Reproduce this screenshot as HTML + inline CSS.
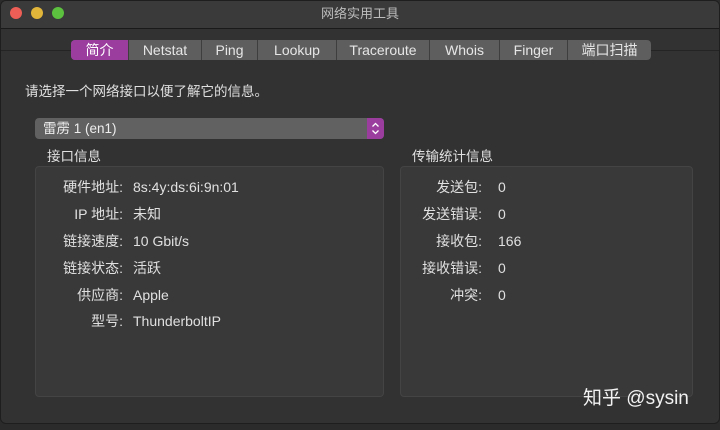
<!DOCTYPE html>
<html><head><meta charset="utf-8"><style>
*{margin:0;padding:0;box-sizing:border-box}
body{width:720px;height:430px;background:#2b2b2b;font-family:"Liberation Sans","Noto Sans CJK SC",sans-serif;color:#dcdcdc;position:relative;overflow:hidden}
.win{position:absolute;left:0;top:0;width:720px;height:424px;background:#323232;border-radius:6px;overflow:hidden;border:1px solid #1e1e1e}
.title{height:28px;background:#3a3a3a;border-bottom:1px solid #1a1a1a;text-align:center;font-size:13px;line-height:26px;color:#bcbcbc}
.dot{position:absolute;top:6px;width:12px;height:12px;border-radius:50%}
.hline{position:absolute;left:0;right:0;top:49px;height:1px;background:#242424}
.tabs{position:absolute;top:39px;left:70px;height:20px;display:flex;border-radius:4px;overflow:hidden;background:#5e5e5e}
.tabs div{font-size:14px;line-height:20px;color:#e6e6e6;text-align:center;border-right:1px solid #3e3e3e}
.tabs .on{background:#9a3d9f;color:#fff}
.t{position:absolute;font-size:13.5px;line-height:18px;color:#e0e0e0}
.pop{position:absolute;left:34px;top:117px;width:349px;height:21px;background:#616161;border-radius:4px;font-size:13.5px;line-height:21px;padding-left:8px;color:#eee}
.pop .ar{position:absolute;right:0;top:0;width:17px;height:21px;background:#9a3d9f;border-radius:0 4px 4px 0}
.box{position:absolute;top:165px;height:231px;background:#393939;border:1px solid #444;border-radius:4px}
.row{position:absolute;display:flex;font-size:14px;line-height:18px;height:18px;color:#e0e0e0;white-space:nowrap}
.row .l{text-align:right;flex:none}
.L .l{width:82px;margin-right:10px}
.R .l{width:81px;margin-right:16px}
</style></head><body>
<div class="win">
<div class="title">网络实用工具</div>
<div class="dot" style="left:9px;background:#ed5e56"></div>
<div class="dot" style="left:30px;background:#e0b53a"></div>
<div class="dot" style="left:51px;background:#5cc13e"></div>
<div class="hline"></div>
<div class="tabs">
<div class="on" style="width:58px">简介</div><div style="width:73px">Netstat</div><div style="width:56px">Ping</div><div style="width:79px">Lookup</div><div style="width:93px">Traceroute</div><div style="width:70px">Whois</div><div style="width:68px">Finger</div><div style="width:83px;border:none">端口扫描</div>
</div>
<div class="t" style="left:24px;top:82px">请选择一个网络接口以便了解它的信息。</div>
<div class="pop">雷雳 1 (en1)<div class="ar"><svg width="17" height="21"><path d="M5.5 8.5 8.5 5.5 11.5 8.5M5.5 12.5 8.5 15.5 11.5 12.5" fill="none" stroke="#fff" stroke-width="1.3"/></svg></div></div>
<div class="t" style="left:46px;top:147px">接口信息</div>
<div class="t" style="left:411px;top:147px">传输统计信息</div>
<div class="box" style="left:34px;width:349px"></div>
<div class="box" style="left:399px;width:293px"></div>

<div class="row L" style="top:177px;left:40px"><span class="l">硬件地址:</span><span>8s:4y:ds:6i:9n:01</span></div>
<div class="row L" style="top:204px;left:40px"><span class="l">IP 地址:</span><span>未知</span></div>
<div class="row L" style="top:231px;left:40px"><span class="l">链接速度:</span><span>10 Gbit/s</span></div>
<div class="row L" style="top:258px;left:40px"><span class="l">链接状态:</span><span>活跃</span></div>
<div class="row L" style="top:285px;left:40px"><span class="l">供应商:</span><span>Apple</span></div>
<div class="row L" style="top:311px;left:40px"><span class="l">型号:</span><span>ThunderboltIP</span></div>

<div class="row R" style="top:177px;left:400px"><span class="l">发送包:</span><span>0</span></div>
<div class="row R" style="top:204px;left:400px"><span class="l">发送错误:</span><span>0</span></div>
<div class="row R" style="top:231px;left:400px"><span class="l">接收包:</span><span>166</span></div>
<div class="row R" style="top:258px;left:400px"><span class="l">接收错误:</span><span>0</span></div>
<div class="row R" style="top:285px;left:400px"><span class="l">冲突:</span><span>0</span></div>
<div class="t" style="left:582px;top:386px;font-size:19px;line-height:24px;color:#f2f2f2">知乎 @sysin</div>
</div>
</body></html>
